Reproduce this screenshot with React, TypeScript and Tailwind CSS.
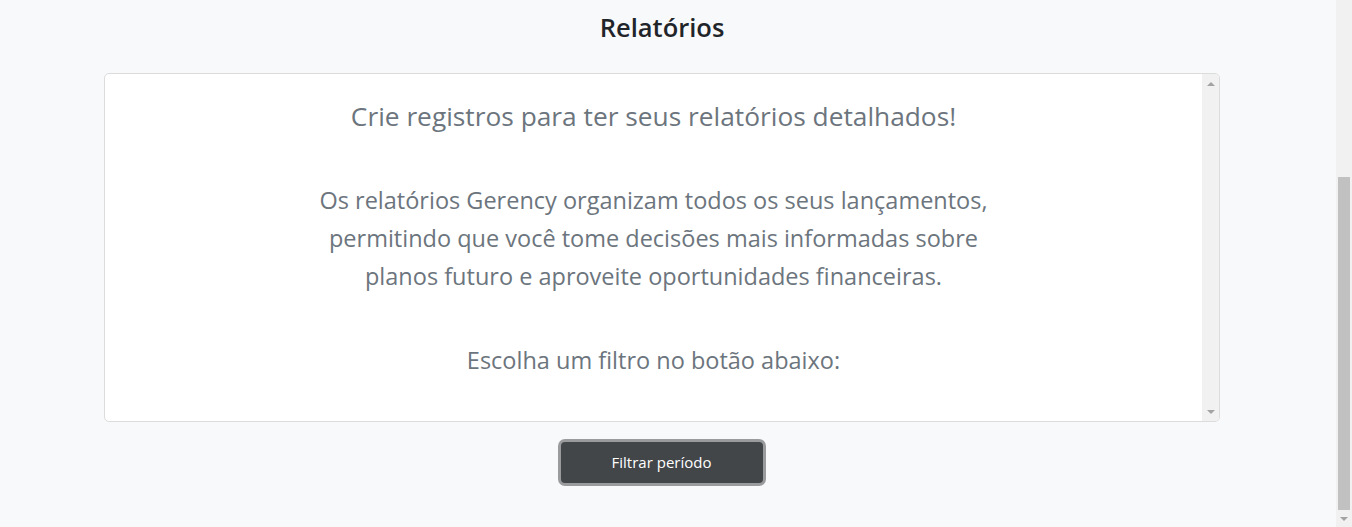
const ScrollArrow = ({ down }: { down?: boolean }) => (
  <div className="h-[17px] w-full flex items-center justify-center">
    <div
      className={
        down
          ? 'w-0 h-0 border-l-[4px] border-r-[4px] border-t-[4px] border-l-transparent border-r-transparent border-t-[#a3a3a3]'
          : 'w-0 h-0 border-l-[4px] border-r-[4px] border-b-[4px] border-l-transparent border-r-transparent border-b-[#a3a3a3]'
      }
    />
  </div>
);

export default function App() {
  return (
    <div
      className="flex h-[527px] w-full bg-[#f8f9fa] overflow-hidden"
      style={{ fontFamily: '"Open Sans", "Noto Sans", sans-serif' }}
    >
      {/* Page */}
      <div className="flex-1 flex flex-col pl-[104px] pr-[116px]">
        <h1 className="h-[56px] flex items-center justify-center text-[#212529] text-[25.5px] font-semibold pb-[1px]">
          Relatórios
        </h1>

        {/* Card */}
        <div className="mt-[17px] h-[349px] bg-white border border-[#dcdcdc] rounded-[5px] flex overflow-hidden">
          <div className="flex-1 flex flex-col items-center text-center text-[#6c757d]">
            <h4 className="mt-[27px] text-[26.3px] leading-[31px]">
              Crie registros para ter seus relatórios detalhados!
            </h4>
            <p className="mt-[49px] text-[23.5px] leading-[38px]">
              Os relatórios Gerency organizam todos os seus lançamentos,
              <br />
              permitindo que você tome decisões mais informadas sobre
              <br />
              planos futuro e aproveite oportunidades financeiras.
            </p>
            <p className="mt-[46px] text-[23.5px] leading-[38px]">Escolha um filtro no botão abaixo:</p>
          </div>
          <div className="w-[17px] bg-[#f1f1f1] flex flex-col justify-between py-[1px]">
            <ScrollArrow />
            <ScrollArrow down />
          </div>
        </div>

        {/* Button */}
        <div className="flex justify-center mt-[17px] pr-[1px]">
          <button className="w-[208px] h-[47px] rounded-[7px] border-[3px] border-[#9a9b9d] bg-[#424649] text-white text-[15px]">
            Filtrar período
          </button>
        </div>
      </div>

      {/* Window scrollbar */}
      <div className="w-[16px] bg-[#f1f1f1] flex flex-col">
        <div className="h-[177px]" />
        <div className="flex-1 mx-[2px] bg-[#c1c1c1]" />
        <ScrollArrow down />
      </div>
    </div>
  );
}
